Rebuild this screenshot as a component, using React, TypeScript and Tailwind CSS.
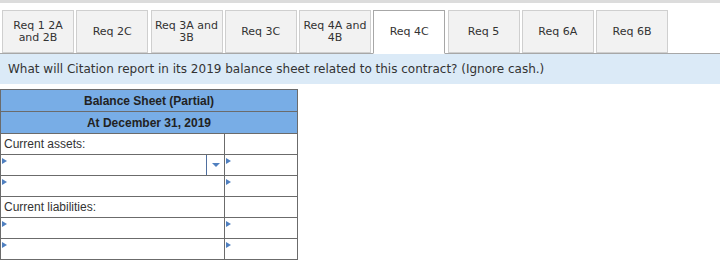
import React from 'react';

const tabs = [
  'Req 1 2A and 2B',
  'Req 2C',
  'Req 3A and 3B',
  'Req 3C',
  'Req 4A and 4B',
  'Req 4C',
  'Req 5',
  'Req 6A',
  'Req 6B',
];

const ACTIVE = 'Req 4C';

// small blue marker shown at the left of an input cell
const Marker = () => (
  <span className="absolute left-[1px] top-[3px] w-0 h-0 border-y-[3px] border-y-transparent border-l-[5px] border-l-[#4f7fbf]" />
);

const InputCell: React.FC<{ select?: boolean }> = ({ select }) => (
  <td className="relative h-[21px] border border-[#6b6b6b] p-0">
    <Marker />
    {select && (
      <div className="absolute right-0 top-0 bottom-0 w-[18px] border-l border-l-[#4f6f9f] flex items-center justify-center">
        <span className="w-0 h-0 border-x-[4px] border-x-transparent border-t-[4px] border-t-[#4f7fbf]" />
      </div>
    )}
  </td>
);

const LabelRow: React.FC<{ label: string }> = ({ label }) => (
  <tr>
    <td className="h-[21px] border border-[#6b6b6b] px-[3px] py-0 text-[12px] text-[#333] leading-none align-middle">
      {label}
    </td>
    <td className="border border-[#6b6b6b]" />
  </tr>
);

const InputRow: React.FC<{ select?: boolean }> = ({ select }) => (
  <tr>
    <InputCell select={select} />
    <InputCell />
  </tr>
);

export default function App() {
  return (
    <div className="w-[720px] h-[262px] bg-white overflow-hidden" style={{ fontFamily: 'Tahoma, "DejaVu Sans", sans-serif' }}>
      <div className="h-[3px] bg-[#dcdcdc]" />

      {/* --- TABS --- */}
      <div className="flex items-start gap-[2.25px] pl-[2px] pt-[7px] border-b border-b-[#a7a7a7] h-[51px]">
        {tabs.map(t => {
          const active = t === ACTIVE;
          return (
            <div
              key={t}
              className={`w-[72px] flex items-center justify-center text-center px-0 text-[11px] leading-[12px] text-[#333] border ${
                active
                  ? 'bg-white border-[#a7a7a7] border-b-white h-[44px] relative z-10'
                  : 'bg-[#f2f2f2] border-[#cfcfcf] h-[43px]'
              }`}
            >
              {t}
            </div>
          );
        })}
      </div>

      {/* --- QUESTION BAR --- */}
      <div className="h-[30px] bg-[#dbeaf7] flex items-center pl-[8px] text-[12px] text-[#333]">
        What will Citation report in its 2019 balance sheet related to this contract? (Ignore cash.)
      </div>

      {/* --- BALANCE SHEET --- */}
      <div className="pt-[5px]" style={{ fontFamily: '"Liberation Sans", Arial, sans-serif' }}>
        <table className="border-collapse w-[297px] table-fixed">
          <colgroup>
            <col className="w-[224px]" />
            <col className="w-[73px]" />
          </colgroup>
          <tbody>
            <tr>
              <td colSpan={2} className="h-[22px] bg-[#78ade6] border border-[#6b6b6b] text-center text-[12px] font-bold text-[#222] p-0">
                Balance Sheet (Partial)
              </td>
            </tr>
            <tr>
              <td colSpan={2} className="h-[22px] bg-[#78ade6] border border-[#6b6b6b] text-center text-[12px] font-bold text-[#222] p-0">
                At December 31, 2019
              </td>
            </tr>
            <LabelRow label="Current assets:" />
            <InputRow select />
            <InputRow />
            <LabelRow label="Current liabilities:" />
            <InputRow />
            <InputRow />
          </tbody>
        </table>
      </div>
    </div>
  );
}
